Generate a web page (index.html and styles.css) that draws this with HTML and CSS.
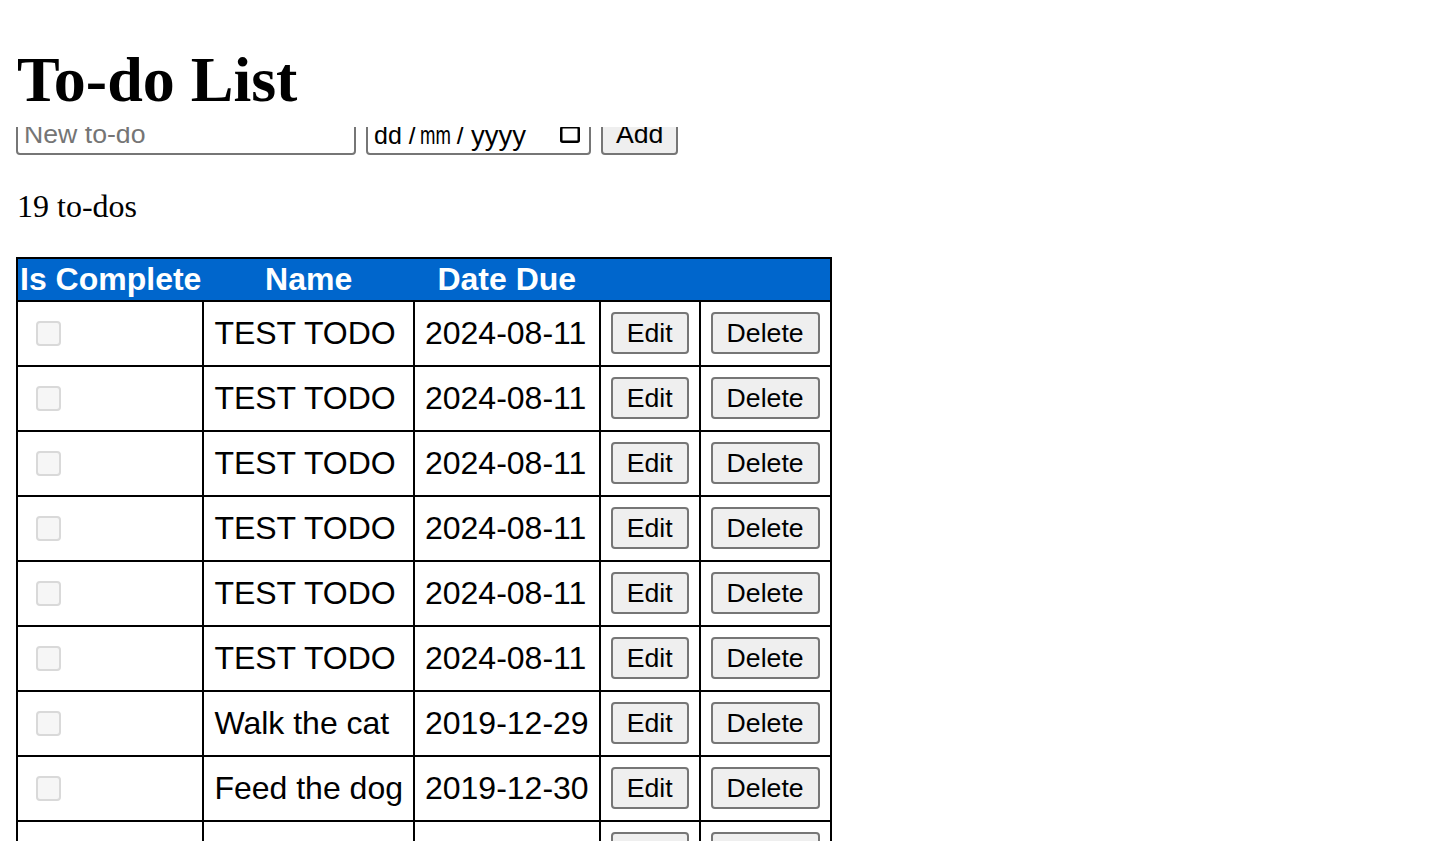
FILE: index.html
```html
<!DOCTYPE html>
<html lang="en">
<head>
<meta charset="utf-8">
<title>To-do List</title>
<link rel="stylesheet" href="styles.css">
</head>
<body>
<header class="page-header">
  <h1 class="title">To-do List</h1>
</header>
<form class="add-form">
  <input class="field text-field" type="text" placeholder="New to-do">
  <div class="field date-field">
    <span class="seg seg-dd">dd</span><span class="sep sep-1">/</span><span class="seg seg-mm">mm</span><span class="sep sep-2">/</span><span class="seg seg-yy">yyyy</span>
    <svg class="cal-icon" width="20" height="17" viewBox="0 0 20 17" aria-hidden="true"><rect x="1.25" y="1.25" width="17.5" height="14.5" rx="1.5" fill="none" stroke="#000" stroke-width="2.5"/></svg>
  </div>
  <button class="btn add-btn" type="button">Add</button>
</form>
<p class="count">19 to-dos</p>
<table class="todos">
  <thead>
    <tr class="head-row">
      <th>Is Complete</th>
      <th>Name</th>
      <th>Date Due</th>
      <th></th>
      <th></th>
    </tr>
  </thead>
  <tbody>
    <tr><td><input class="check" type="checkbox" disabled></td><td>TEST TODO</td><td>2024-08-11</td><td><button class="btn" type="button">Edit</button></td><td><button class="btn" type="button">Delete</button></td></tr>
    <tr><td><input class="check" type="checkbox" disabled></td><td>TEST TODO</td><td>2024-08-11</td><td><button class="btn" type="button">Edit</button></td><td><button class="btn" type="button">Delete</button></td></tr>
    <tr><td><input class="check" type="checkbox" disabled></td><td>TEST TODO</td><td>2024-08-11</td><td><button class="btn" type="button">Edit</button></td><td><button class="btn" type="button">Delete</button></td></tr>
    <tr><td><input class="check" type="checkbox" disabled></td><td>TEST TODO</td><td>2024-08-11</td><td><button class="btn" type="button">Edit</button></td><td><button class="btn" type="button">Delete</button></td></tr>
    <tr><td><input class="check" type="checkbox" disabled></td><td>TEST TODO</td><td>2024-08-11</td><td><button class="btn" type="button">Edit</button></td><td><button class="btn" type="button">Delete</button></td></tr>
    <tr><td><input class="check" type="checkbox" disabled></td><td>TEST TODO</td><td>2024-08-11</td><td><button class="btn" type="button">Edit</button></td><td><button class="btn" type="button">Delete</button></td></tr>
    <tr><td><input class="check" type="checkbox" disabled></td><td>Walk the cat</td><td>2019-12-29</td><td><button class="btn" type="button">Edit</button></td><td><button class="btn" type="button">Delete</button></td></tr>
    <tr><td><input class="check" type="checkbox" disabled></td><td>Feed the dog</td><td>2019-12-30</td><td><button class="btn" type="button">Edit</button></td><td><button class="btn" type="button">Delete</button></td></tr>
    <tr><td><input class="check" type="checkbox" disabled></td><td>Buy milk</td><td>2019-12-31</td><td><button class="btn" type="button">Edit</button></td><td><button class="btn" type="button">Delete</button></td></tr>
    <tr><td><input class="check" type="checkbox" disabled></td><td>Clean room</td><td>2020-01-01</td><td><button class="btn" type="button">Edit</button></td><td><button class="btn" type="button">Delete</button></td></tr>
    <tr><td><input class="check" type="checkbox" disabled></td><td>Pay bills</td><td>2020-01-02</td><td><button class="btn" type="button">Edit</button></td><td><button class="btn" type="button">Delete</button></td></tr>
    <tr><td><input class="check" type="checkbox" disabled></td><td>Call mom</td><td>2020-01-03</td><td><button class="btn" type="button">Edit</button></td><td><button class="btn" type="button">Delete</button></td></tr>
    <tr><td><input class="check" type="checkbox" disabled></td><td>Wash car</td><td>2020-01-04</td><td><button class="btn" type="button">Edit</button></td><td><button class="btn" type="button">Delete</button></td></tr>
    <tr><td><input class="check" type="checkbox" disabled></td><td>Read book</td><td>2020-01-05</td><td><button class="btn" type="button">Edit</button></td><td><button class="btn" type="button">Delete</button></td></tr>
    <tr><td><input class="check" type="checkbox" disabled></td><td>Go running</td><td>2020-01-06</td><td><button class="btn" type="button">Edit</button></td><td><button class="btn" type="button">Delete</button></td></tr>
    <tr><td><input class="check" type="checkbox" disabled></td><td>Water plants</td><td>2020-01-07</td><td><button class="btn" type="button">Edit</button></td><td><button class="btn" type="button">Delete</button></td></tr>
    <tr><td><input class="check" type="checkbox" disabled></td><td>Cook dinner</td><td>2020-01-08</td><td><button class="btn" type="button">Edit</button></td><td><button class="btn" type="button">Delete</button></td></tr>
    <tr><td><input class="check" type="checkbox" disabled></td><td>Do laundry</td><td>2020-01-09</td><td><button class="btn" type="button">Edit</button></td><td><button class="btn" type="button">Delete</button></td></tr>
    <tr><td><input class="check" type="checkbox" disabled></td><td>Study</td><td>2020-01-10</td><td><button class="btn" type="button">Edit</button></td><td><button class="btn" type="button">Delete</button></td></tr>
  </tbody>
</table>
</body>
</html>
```

FILE: styles.css
```css
html, body {
  background: #fff;
}

body {
  margin: 0 16px 16px;
  font-family: "Liberation Serif", "Times New Roman", serif;
  font-size: 32px;
  color: #000;
}

.page-header {
  position: relative;
  z-index: 1;
  background: #fff;
  height: 127px;
  box-sizing: border-box;
  padding-top: 43px;
  margin: 0 -16px;
  padding-left: 17px;
}

.title {
  margin: 0;
  font-size: 64px;
  line-height: 73.6px;
  font-weight: bold;
}

.add-form {
  display: flex;
  align-items: flex-start;
  gap: 10px;
  margin-top: -14px;
}

.field {
  box-sizing: border-box;
  height: 42px;
  border: 2px solid #767676;
  border-radius: 4px;
  background: #fff;
  font-family: "Liberation Sans", Arial, sans-serif;
  font-size: 26.67px;
  color: #000;
}

.text-field {
  width: 340px;
  padding: 0 6px;
  margin: 0;
  outline: none;
}

.text-field::placeholder {
  color: #757575;
}

.date-field {
  width: 225px;
  display: flex;
  align-items: center;
  padding: 3px 9px 0 6px;
}

.seg-dd {
  font-size: 25px;
}

.seg-mm {
  display: inline-block;
  font-size: 25px;
  transform: scaleX(0.74);
  transform-origin: left center;
  margin-right: -11px;
}

.seg-yy {
  font-size: 27.5px;
}

.sep {
  font-size: 26px;
}

.sep-1 {
  padding: 0 4px 0 7px;
}

.sep-2 {
  padding: 0 7px 0 6px;
}

.cal-icon {
  margin-left: auto;
  margin-top: -2px;
  display: block;
}

.btn {
  box-sizing: border-box;
  height: 42px;
  padding: 0 14px;
  margin: 0;
  border: 2px solid #767676;
  border-radius: 4px;
  background: #efefef;
  font-family: "Liberation Sans", Arial, sans-serif;
  font-size: 26.67px;
  color: #000;
  line-height: 1;
}

.add-btn {
  padding: 0 13px;
}

.count {
  margin: 33px 0 32px;
  padding-left: 1px;
  line-height: 36.8px;
}

.todos {
  border-collapse: collapse;
  border: 2px solid #000;
  font-family: "Liberation Sans", Arial, sans-serif;
  font-size: 32px;
}

.head-row {
  background: #0066cc;
}

.todos th {
  color: #fff;
  font-weight: bold;
  padding: 2px;
  line-height: 36.8px;
  text-align: center;
  border: none;
}

.todos td {
  border: 2px solid #000;
  padding: 10.5px 10px;
  line-height: 36.8px;
  white-space: nowrap;
}

.check {
  appearance: none;
  -webkit-appearance: none;
  display: block;
  box-sizing: border-box;
  width: 25px;
  height: 25px;
  margin: 0 0 0 8px;
  border: 2px solid #d9d9d9;
  border-radius: 4px;
  background: #f6f6f6;
}
```
